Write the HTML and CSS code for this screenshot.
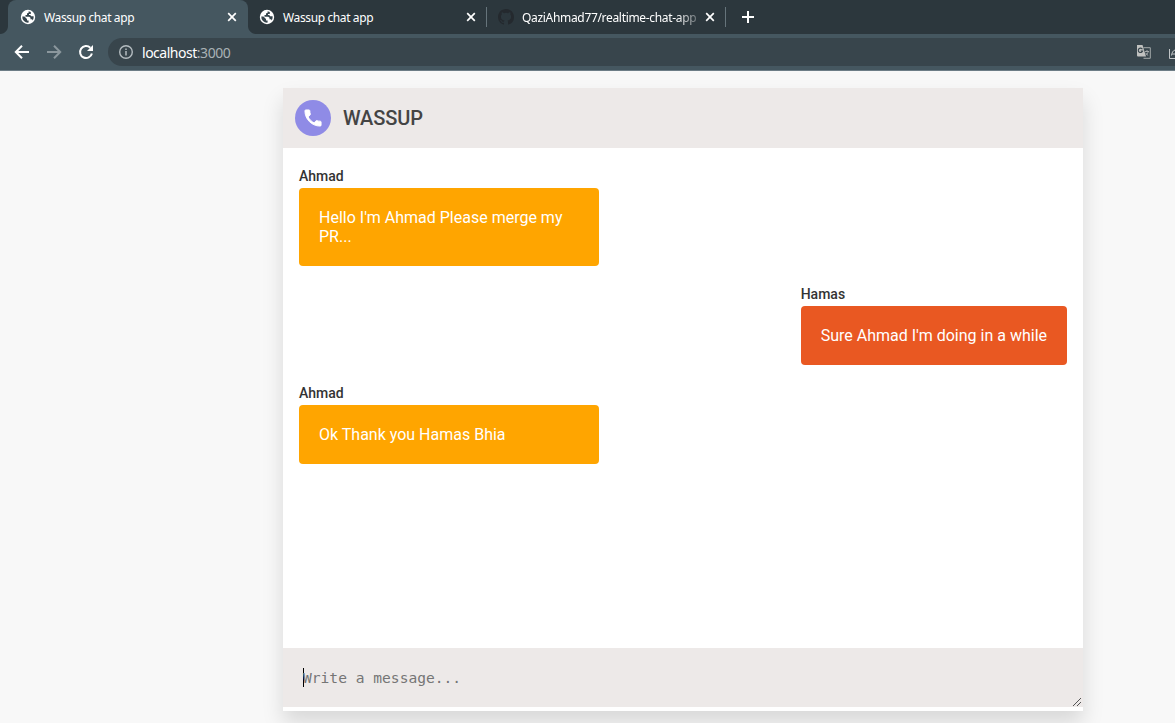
FILE: index.html
```html
<!DOCTYPE html>
<html lang="en">
<head>
<meta charset="utf-8">
<title>Wassup chat app</title>
<link rel="stylesheet" href="styles.css">
</head>
<body>
<svg class="defs" width="0" height="0">
  <defs>
    <symbol id="globe" viewBox="0 0 16 16"><circle cx="8" cy="8" r="7.200" fill="#fff"/><path class="land" d="M8.500 2.200 8.800 3.600 7 4.500v1.600H5.500v1.600h3.700l1.300 1.100v1.500h1.600l.7 1.100A5.700 5.700 0 0 0 13.600 7.200h-2.400L10.200 5.900H9V4.900h1.800V2.900ZM2.300 7.400H4.500l2.500 2.500v1.500h1.600v2.200A5.700 5.700 0 0 1 2.300 7.400Z"/></symbol>
    <symbol id="close" viewBox="0 0 10 10"><path d="m1.200 1.200 7.600 7.600m0-7.600L1.200 8.800" fill="none" stroke="#fff" stroke-width="1.700"/></symbol>
  </defs>
</svg>
<header class="browser">
  <div class="tabs">
    <div class="tab active">
      <svg class="favicon"><use href="#globe"/></svg>
      <span class="tab-title">Wassup chat app</span>
      <svg class="close"><use href="#close"/></svg>
    </div>
    <div class="tab inactive">
      <svg class="favicon"><use href="#globe"/></svg>
      <span class="tab-title">Wassup chat app</span>
      <svg class="close"><use href="#close"/></svg>
    </div>
    <div class="tab divided">
      <svg class="favicon" viewBox="0 0 16 16"><path fill="#24292e" d="M8 0C3.580 0 0 3.580 0 8c0 3.540 2.290 6.530 5.470 7.590.4.070.55-.17.55-.38 0-.19-.01-.82-.01-1.490-2.010.37-2.530-.49-2.690-.94-.09-.23-.48-.94-.82-1.130-.28-.15-.68-.52-.01-.53.63-.01 1.080.58 1.230.82.72 1.210 1.870.87 2.330.66.07-.52.28-.87.51-1.070-1.780-.2-3.640-.89-3.640-3.950 0-.87.31-1.590.82-2.150-.08-.2-.36-1.020.08-2.120 0 0 .67-.21 2.200.82a7.600 7.600 0 0 1 4 0c1.530-1.040 2.200-.82 2.200-.82.44 1.100.16 1.920.08 2.120.51.56.82 1.270.82 2.150 0 3.070-1.870 3.750-3.650 3.950.29.25.54.73.54 1.480 0 1.070-.01 1.930-.01 2.200 0 .21.15.46.55.38A8 8 0 0 0 16 8c0-4.420-3.580-8-8-8Z"/></svg>
      <span class="tab-title faded">QaziAhmad77/realtime-chat-app</span>
      <svg class="close"><use href="#close"/></svg>
    </div>
    <svg class="new-tab" viewBox="0 0 12 12"><path d="M6 0v12M0 6h12" stroke="#fff" stroke-width="2"/></svg>
  </div>
  <div class="toolbar">
    <svg class="nav" viewBox="0 0 16 16"><path d="M15 8H2m6-6.200L1.800 8 8 14.200" fill="none" stroke="#fff" stroke-width="2"/></svg>
    <svg class="nav" viewBox="0 0 16 16"><path d="M1 8h13M8 1.800 14.200 8 8 14.200" fill="none" stroke="#8b979d" stroke-width="2"/></svg>
    <svg class="nav" viewBox="0 0 16 16"><path d="M13.900 9.500A6 6 0 1 1 12.300 3.800" fill="none" stroke="#fff" stroke-width="2"/><path d="M15 1v6H9Z" fill="#fff"/></svg>
    <div class="address">
      <svg class="info" viewBox="0 0 16 16"><circle cx="8" cy="8" r="6.300" fill="none" stroke="#b4bcc0" stroke-width="1.400"/><path d="M8 7v4.400M8 4.400V6" stroke="#b4bcc0" stroke-width="1.500"/></svg>
      <span class="url">localhost<span class="port">:3000</span></span>
      <svg class="translate" viewBox="0 0 14 14"><path d="M6.500 2.700h6.800v10.600H6.500" fill="none" stroke="#a3a8a9"/><path d="M0 0h5.500L9 11.500H1A1 1 0 0 1 0 10.500Z" fill="#c1c2c0"/><path d="M5.400 4.200A2.200 2.200 0 1 0 5.600 6H3.700" fill="none" stroke="#38454c" stroke-width="1.100"/><path d="M8 6.500h4M10 5v1.500m1.200 0c-.3 1.800-1.500 3-2.600 3.800m0-2.500c.7 1.300 1.600 2 2.600 2.700" fill="none" stroke="#a3a8a9"/></svg>
      <svg class="share" viewBox="0 0 6 14"><path d="M6 13.500H.5V4M2.500 10.500C2.700 8 4 5.500 6 5M3 9h3" fill="none" stroke="#c1c5c7"/></svg>
    </div>
  </div>
</header>
<main class="page">
  <section class="chat">
    <div class="brand">
      <svg class="logo" viewBox="0 0 36 36"><circle cx="18" cy="18" r="18" fill="#8f8be6"/><path transform="translate(7.200 7.200) scale(.9)" fill="#fff" stroke="#fff" stroke-width="1" stroke-linejoin="round" d="M6.620 10.790c1.440 2.830 3.760 5.140 6.590 6.590l2.200-2.200c.27-.27.67-.36 1.020-.24 1.120.37 2.330.57 3.570.57.55 0 1 .45 1 1V20c0 .55-.45 1-1 1-9.390 0-17-7.610-17-17 0-.55.45-1 1-1h3.500c.55 0 1 .45 1 1 0 1.250.2 2.450.57 3.570.11.35.03.74-.25 1.020l-2.200 2.200Z"/></svg>
      <h1>WASSUP</h1>
    </div>
    <div class="messages">
      <article class="message incoming"><h4>Ahmad</h4><p>Hello I'm Ahmad Please merge my PR...</p></article>
      <article class="message outgoing"><h4>Hamas</h4><p>Sure Ahmad I'm doing in a while</p></article>
      <article class="message incoming"><h4>Ahmad</h4><p>Ok Thank you Hamas Bhia</p></article>
    </div>
    <div class="composer">
      <span class="caret"></span><span class="placeholder">Write a message...</span>
      <svg class="grip" viewBox="0 0 9 9" shape-rendering="crispEdges"><path d="M0 8h1v1H0zM1 7h1v1H1zM2 6h1v1H2zM3 5h1v1H3zM4 4h1v1H4zM5 3h1v1H5zM6 2h1v1H6zM7 1h1v1H7zM4 8h1v1H4zM5 7h1v1H5zM6 6h1v1H6zM7 5h1v1H7z" fill="#555"/></svg>
    </div>
  </section>
</main>
</body>
</html>
```

FILE: styles.css
```css
* { box-sizing: border-box; margin: 0; padding: 0; }
body { height: 723px; overflow: hidden; background: #f8f8f8; font-family: Roboto, sans-serif; }
svg { display: block; flex: none; }
.defs { position: absolute; }
.browser { height: 71px; background: #455760; border-bottom: 1px solid #6d7d86; font-family: "Noto Sans", sans-serif; }
.tabs { display: flex; height: 34px; padding-left: 8px; background: #2c373d; }
.tab { display: flex; align-items: center; width: 239px; padding: 0 11px 0 12px; color: #fff; }
.tab.active { position: relative; width: 240px; background: #455760; border-radius: 8px 8px 0 0; }
/* Curved feet that join the active tab to the toolbar */
.tab.active::before, .tab.active::after { content: ""; position: absolute; bottom: 0; width: 8px; height: 8px; }
.tab.active::before { right: 100%; background: radial-gradient(circle at 0 0, transparent 7.5px, #455760 8.5px); }
.tab.active::after { left: 100%; background: radial-gradient(circle at 100% 0, transparent 7.5px, #455760 8.5px); }
.tab.inactive { width: 238px; padding: 0 10px 0 11px; }
.tab.divided { width: 240px; height: 20px; margin-top: 7px; padding: 0 10px 0 11px; border: solid #66747b; border-width: 0 1px; }
.favicon { width: 16px; height: 16px; margin-right: 8px; }
.land { fill: #35444c; }
.tab-title { flex: 1; white-space: nowrap; font-size: 12px; letter-spacing: -.38px; }
.tab-title.faded { letter-spacing: -.32px; -webkit-mask-image: linear-gradient(90deg, #000 155px, rgba(0, 0, 0, .25) 176px); mask-image: linear-gradient(90deg, #000 155px, rgba(0, 0, 0, .25) 176px); }
.close { width: 10px; height: 10px; }
.new-tab { width: 12px; height: 12px; margin: 11px 0 0 16px; }
.toolbar { display: flex; align-items: center; gap: 16px; height: 36px; padding-left: 14px; }
.nav { width: 16px; height: 16px; }
.address { display: flex; align-items: center; flex: 1; height: 28px; margin-left: -2px; padding-left: 10px; background: #38454c; border-radius: 14px 0 0 14px; }
.info { width: 16px; height: 16px; margin-right: 8px; }
.url { flex: 1; color: #fff; font-size: 14px; letter-spacing: -.48px; }
.port { color: #a9b2b6; }
.translate { width: 14px; height: 14px; margin-right: 18px; }
.share { width: 6px; height: 14px; }
.page { padding-top: 17px; }
.chat { width: 800px; height: 623px; margin-left: 283px; background: #fff; box-shadow: 0 12px 20px rgba(0, 0, 0, .13); }
.brand { display: flex; align-items: center; gap: 12px; height: 60px; padding-left: 12px; background: #ede9e8; }
.logo { width: 36px; height: 36px; }
h1 { font-size: 20px; font-weight: 500; letter-spacing: -.1px; color: #444; }
.messages { display: flex; flex-direction: column; gap: 20px; height: 500px; padding: 20px 16px; }
.message { max-width: 300px; }
.message h4 { height: 20px; line-height: 17px; font-size: 14px; font-weight: 500; color: #333; }
.message p { padding: 20px; border-radius: 4px; font-size: 16px; line-height: 19px; color: #fff; }
.incoming { width: 300px; }
.incoming p { background: #ffa500; }
.outgoing { align-self: flex-end; }
.outgoing p { background: #e95822; }
.composer { display: flex; position: relative; height: 59px; padding: 20px; background: #ede9e8; }
.caret { width: 1px; height: 19px; margin-right: -1px; background: #000; }
.placeholder { font: 14.6px/19px "DejaVu Sans Mono", monospace; color: #757575; }
.grip { position: absolute; right: 1px; bottom: 1px; width: 9px; height: 9px; }
```
